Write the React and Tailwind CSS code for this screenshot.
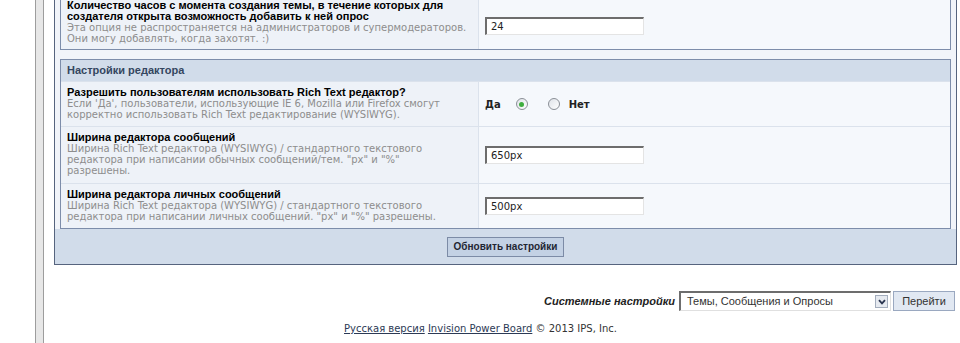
import React from "react";

const titleCls =
  "text-[11px] leading-[11px] font-bold text-black font-['Liberation_Sans',sans-serif]";
const descCls =
  "text-[10px] leading-[11px] text-[#8d8d8d] font-['DejaVu_Sans',sans-serif]";

function TextBox({ value }) {
  return (
    <input
      readOnly
      defaultValue={value}
      className="w-[159px] h-[18px] bg-white border-t-2 border-l-2 border-r border-b border-t-[#6d6d6d] border-l-[#6d6d6d] border-r-[#e4e4e4] border-b-[#e4e4e4] pl-[4px] text-[10px] text-[#222] font-['DejaVu_Sans',sans-serif] outline-none"
    />
  );
}

function Radio({ checked }) {
  return (
    <span className="w-[12px] h-[12px] rounded-full border border-[#8a8f96] bg-gradient-to-br from-[#dfe3e8] to-white flex items-center justify-center">
      {checked && <span className="w-[5px] h-[5px] rounded-full bg-[#3fae3f]" />}
    </span>
  );
}

function Row({ title, lines, children, last, pb = "pb-[6px]" }) {
  return (
    <div className={`flex ${last ? "" : "border-b border-[#dbe2ec]"}`}>
      <div className={`w-[418px] shrink-0 bg-[#eef2f8] border-r border-[#dbe2ec] pl-[6px] pt-[5px] ${pb}`}>
        {title.map((t) => (
          <div key={t} className={titleCls}>
            {t}
          </div>
        ))}
        {lines.map((l) => (
          <div key={l} className={descCls}>
            {l}
          </div>
        ))}
      </div>
      <div className="flex-1 bg-[#f5f8fc] flex items-center pl-[6px]">{children}</div>
    </div>
  );
}

export default function App() {
  return (
    <div className="w-[960px] h-[343px] overflow-hidden bg-white flex">
      <div className="w-[35px] shrink-0" />
      <div className="w-[9px] shrink-0 border-x border-[#9d9d9d] bg-[#e7e7e7]" />
      <div className="w-[10px] shrink-0" />
      <div className="w-[903px] shrink-0 flex flex-col">
        {/* settings panel */}
        <div className="border-x border-b border-[#56647e] bg-[#f1f4f9]">
          <div className="px-[5px]">
            <div className="border-x border-b border-[#7d8daa] flex h-[50px]">
              <div className="w-[418px] shrink-0 bg-[#eef2f8] border-r border-[#dbe2ec] pl-[6px]">
                <div className={titleCls}>
                  Количество часов с момента создания темы, в течение которых для
                </div>
                <div className={titleCls}>создателя открыта возможность добавить к ней опрос</div>
                <div className={descCls}>
                  Эта опция не распространяется на администраторов и супермодераторов.
                </div>
                <div className={descCls}>Они могу добавлять, когда захотят. :)</div>
              </div>
              <div className="flex-1 bg-[#f5f8fc] pl-[6px] pt-[12px]">
                <TextBox value="24" />
              </div>
            </div>

            <div className="mt-[9px] border border-[#7d8daa]">
              <div className="h-[22px] bg-[#d1dcea] flex items-center pl-[6px] text-[11px] font-bold text-[#34465f] font-['Liberation_Sans',sans-serif] border-b border-[#dbe2ec]">
                Настройки редактора
              </div>
              <Row
                title={["Разрешить пользователям использовать Rich Text редактор?"]}
                lines={[
                  "Если 'Да', пользователи, использующие IE 6, Mozilla или Firefox смогут",
                  "корректно использовать Rich Text редактирование (WYSIWYG).",
                ]}
              >
                <div className="flex items-center text-[10px] font-bold text-[#222] font-['DejaVu_Sans',sans-serif]">
                  <span>Да</span>
                  <span className="ml-[15px]">
                    <Radio checked />
                  </span>
                  <span className="ml-[20px]">
                    <Radio />
                  </span>
                  <span className="ml-[9px]">Нет</span>
                </div>
              </Row>
              <Row
                title={["Ширина редактора сообщений"]}
                lines={[
                  "Ширина Rich Text редактора (WYSIWYG) / стандартного текстового",
                  'редактора при написании обычных сообщений/тем. "px" и "%"',
                  "разрешены.",
                ]}
                pb="pb-[7px]"
              >
                <TextBox value="650px" />
              </Row>
              <Row
                title={["Ширина редактора личных сообщений"]}
                lines={[
                  "Ширина Rich Text редактора (WYSIWYG) / стандартного текстового",
                  'редактора при написании личных сообщений. "px" и "%" разрешены.',
                ]}
                last
              >
                <TextBox value="500px" />
              </Row>
            </div>
          </div>
          <div className="h-[35px] bg-[#d1dcea] flex items-center justify-center">
            <button className="h-[20px] px-[6px] bg-[#c3d1e4] border border-[#7c8ba6] text-[10px] font-bold text-[#1f2633] font-['Liberation_Sans',sans-serif]">
              Обновить настройки
            </button>
          </div>
        </div>

        {/* footer */}
        <div className="mt-[26px] flex items-center justify-end pr-[2px]">
          <span className="text-[11px] font-bold italic text-[#222] font-['Liberation_Sans',sans-serif] mr-[4px]">
            Системные настройки
          </span>
          <div className="w-[212px] h-[20px] bg-white border-t-2 border-l-2 border-t-[#6d6d6d] border-l-[#6d6d6d] border-r border-b border-r-[#e0e0e0] border-b-[#e0e0e0] flex items-center pl-[6px] pr-[2px] text-[11px] text-[#333] font-['Liberation_Sans',sans-serif]">
            <span className="flex-1">Темы, Сообщения и Опросы</span>
            <span className="w-[13px] h-[13px] bg-[#e6eaf0] border border-[#a3adbd] flex items-center justify-center">
              <svg width="8" height="6" viewBox="0 0 8 6">
                <path d="M1 1.2 L4 4.4 L7 1.2" fill="none" stroke="#2a3550" strokeWidth="1.8" />
              </svg>
            </span>
          </div>
          <button className="ml-[2px] h-[20px] w-[62px] bg-[#e1e8f2] border border-[#9aa8c0] text-[11px] text-[#333] font-['Liberation_Sans',sans-serif]">
            Перейти
          </button>
        </div>
        <div className="mt-[10px] text-center text-[10px] text-[#333] font-['DejaVu_Sans',sans-serif] pr-[50px]">
          <a className="underline text-[#2c3a55]">Русская версия</a>{" "}
          <a className="underline text-[#2c3a55]">Invision Power Board</a> © 2013 IPS, Inc.
        </div>
      </div>
    </div>
  );
}
